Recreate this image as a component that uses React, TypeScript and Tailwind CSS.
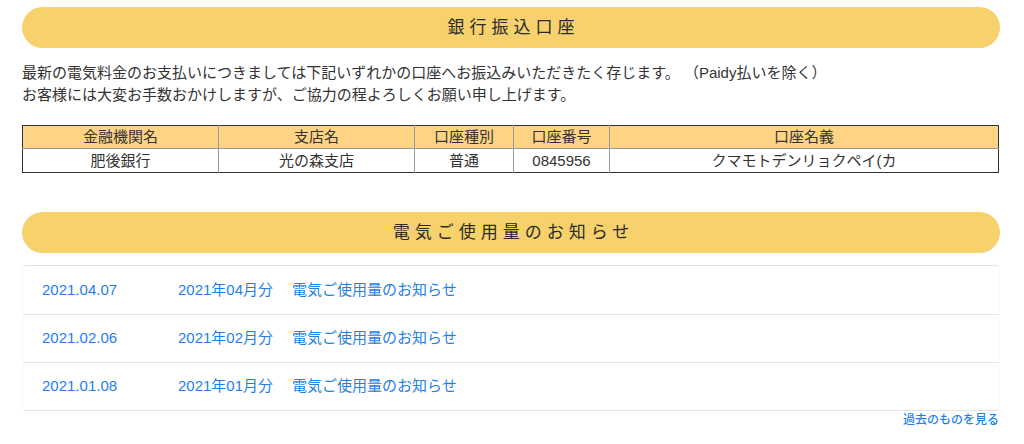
const notices = [
  { date: '2021.04.07', month: '2021年04月分' },
  { date: '2021.02.06', month: '2021年02月分' },
  { date: '2021.01.08', month: '2021年01月分' },
];

const font = { fontFamily: '"Liberation Sans", "Noto Sans CJK JP", sans-serif' };

function Banner({ title }: { title: string }) {
  return (
    <div className="h-[41px] rounded-full bg-[#f6d16c] flex items-center justify-center">
      <h2 className="text-[17px] tracking-[5px] pl-[5px] text-[#2b2b2b] font-normal leading-none">{title}</h2>
    </div>
  );
}

export default function App() {
  return (
    <div className="bg-white min-h-[444px] text-[#333]" style={font}>
      <div className="ml-[22px] w-[978px] pt-[7px]">
        <Banner title="銀行振込口座" />

        <p className="mt-[14px] text-[15px] leading-[22px]">
          最新の電気料金のお支払いにつきましては下記いずれかの口座へお振込みいただきたく存じます。 （Paidy払いを除く）
          <br />
          お客様には大変お手数おかけしますが、ご協力の程よろしくお願い申し上げます。
        </p>

        <table className="mt-[19px] w-[977px] border border-[#333] border-collapse text-[15px] text-center table-fixed">
          <colgroup>
            <col className="w-[196px]" />
            <col className="w-[196px]" />
            <col className="w-[99px]" />
            <col className="w-[96px]" />
            <col />
          </colgroup>
          <thead>
            <tr className="bg-[#fed383] h-[23px] leading-[22px]">
              {['金融機関名', '支店名', '口座種別', '口座番号', '口座名義'].map((h) => (
                <th key={h} className="font-normal border-l border-b border-[#999] first:border-l-0 p-0">
                  {h}
                </th>
              ))}
            </tr>
          </thead>
          <tbody>
            <tr className="h-[24px] leading-[22px]">
              {['肥後銀行', '光の森支店', '普通', '0845956', 'クマモトデンリョクペイ(カ'].map((c) => (
                <td key={c} className="border-l border-[#999] first:border-l-0 p-0">
                  {c}
                </td>
              ))}
            </tr>
          </tbody>
        </table>

        <div className="mt-[39px]">
          <Banner title="電気ご使用量のお知らせ" />
        </div>

        <ul className="mt-[12px] rounded-[4px] border border-[#e4e4e4] border-x-[#fafafa]">
          {notices.map((n, i) => (
            <li
              key={n.date}
              className={
                'h-[48px] flex items-center pl-[19px] text-[15px] text-[#1f7fe9] ' +
                (i > 0 ? 'border-t border-[#e4e4e4]' : '')
              }
            >
              <span className="w-[136px]">{n.date}</span>
              <span className="mr-[19px]">{n.month}</span>
              <span>電気ご使用量のお知らせ</span>
            </li>
          ))}
        </ul>

        <div className="mt-[1px] text-right pr-[1px] text-[12px] leading-[16px] text-[#1f7fe9] font-medium">
          過去のものを見る
        </div>
      </div>
    </div>
  );
}
